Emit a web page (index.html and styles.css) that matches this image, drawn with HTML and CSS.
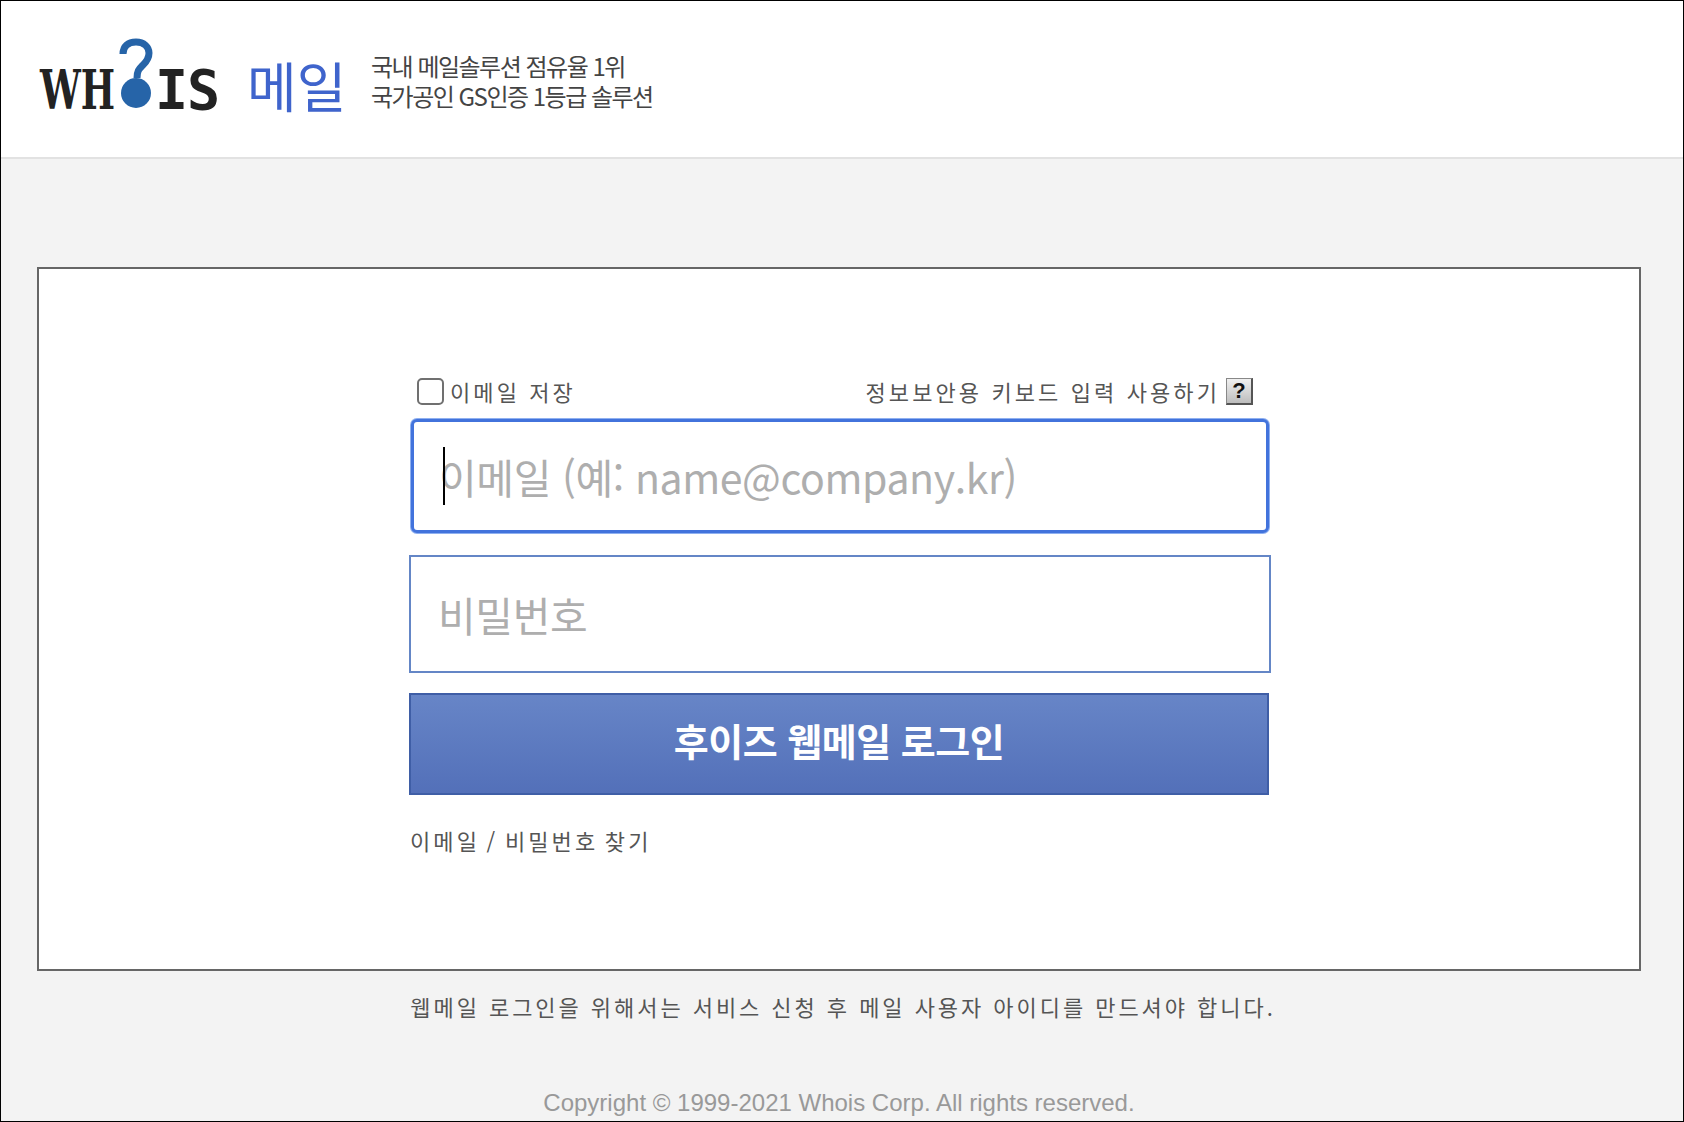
FILE: index.html
```html
<!DOCTYPE html>
<html lang="ko">
<head>
<meta charset="utf-8">
<title>후이즈 웹메일 로그인</title>
<link rel="stylesheet" href="styles.css">
</head>
<body>
<div class="page">
  <header class="top">
    <div class="logo">
      <span class="wm wh">WH</span>
      <svg class="qmark" width="38" height="72" viewBox="0 0 38 72"><path d="M7 16C7 8 12 4 20 4c8 0 13 5 13 11 0 7-4 10-7 13-3 3-5 5-5 12" fill="none" stroke="#2664a8" stroke-width="7"/><circle cx="20" cy="55" r="15" fill="#2664a8"/></svg>
      <span class="wm is">IS</span>
      <span class="mail">메일</span>
    </div>
    <p class="tagline">국내 메일솔루션 점유율 1위<br>국가공인 GS인증 1등급 솔루션</p>
  </header>
  <main class="panel">
    <form class="form">
      <div class="opts">
        <label class="save"><span class="check"></span>이메일 저장</label>
        <div class="kbd">정보보안용 키보드 입력 사용하기<span class="help">?</span></div>
      </div>
      <div class="field focus"><span class="caret"></span><span class="ph">이메일 (예: name@company.kr)</span></div>
      <div class="field pw"><span class="ph">비밀번호</span></div>
      <div class="btn">후이즈 웹메일 로그인</div>
      <a class="find">이메일 / 비밀번호 찾기</a>
    </form>
  </main>
  <p class="note">웹메일 로그인을 위해서는 서비스 신청 후 메일 사용자 아이디를 만드셔야 합니다.</p>
  <p class="copy">Copyright © 1999-2021 Whois Corp. All rights reserved.</p>
</div>
</body>
</html>
```
FILE: styles.css
```css
* { box-sizing: border-box; }
html, body { margin: 0; padding: 0; }
body { font-family: "Noto Sans CJK KR", "Liberation Sans", sans-serif; background: #f3f3f3; }
.page { width: 1684px; height: 1122px; overflow: hidden; border: 1px solid #000; display: flex; flex-direction: column; background: #f3f3f3; }
.top { height: 158px; flex: none; background: #fff; border-bottom: 2px solid #e2e2e2; display: flex; align-items: flex-start; padding: 37px 0 0 39px; }
.logo { display: flex; align-items: flex-end; height: 72px; width: 331px; flex: none; }
.wm { display: block; height: 40px; font: 700 55px/40px "DejaVu Serif", serif; color: #222; transform-origin: left bottom; }
.wh { width: 76px; transform: scaleX(.66); }
.is { width: 66px; font-family: "DejaVu Sans Mono", monospace; letter-spacing: -1px; margin-left: 1px; }
.qmark { flex: none; margin: 0; }
.mail { font: 400 54px/56px "Noto Sans CJK KR", sans-serif; color: #3f64cc; margin-left: 26px; position: relative; top: 3px; }
.tagline { margin: 13px 0 0 0; font-size: 24px; line-height: 30px; letter-spacing: -1.5px; color: #444; }
.panel { width: 1604px; height: 704px; flex: none; margin: 108px 0 0 36px; background: #fff; border: 2px solid #666; padding: 106px 0 0 370px; }
.form { width: 862px; display: flex; flex-direction: column; }
.opts { height: 43px; display: flex; justify-content: space-between; align-items: flex-start; padding: 0 18px 0 8px; font-size: 22px; line-height: 32px; color: #555; letter-spacing: 3.1px; }
.save { display: flex; align-items: center; }
.check { width: 27px; height: 27px; border: 2px solid #707070; border-radius: 5px; margin-right: 6px; background: #fff; }
.kbd { display: flex; align-items: center; }
.help { width: 27px; height: 27px; margin-left: 6px; background: linear-gradient(#f0f0f0, #bdbdbd); border: 1px solid #888; border-right: 2px solid #555; border-bottom: 2px solid #555; font: 700 22px/24px "Liberation Sans", sans-serif; color: #111; text-align: center; letter-spacing: 0; }
.field { height: 118px; background: #fff; border: 2px solid #6486c6; padding-left: 27px; display: flex; align-items: center; position: relative; }
.focus { height: 114px; margin: 1px 2px 22px 2px; border: 3px solid #4273dc; border-radius: 6px; box-shadow: 0 0 0 1px #8fb0f0; padding-left: 25px; }
.ph { font-size: 41px; color: #aeaeae; letter-spacing: -.4px; }
.caret { position: absolute; left: 29px; top: 25px; width: 2px; height: 58px; background: #000; }
.pw { width: 862px; }
.btn { height: 102px; margin: 20px 2px 0 0; background: linear-gradient(#6785c7, #5370b9); border: 2px solid #3f5ea6; color: #fff; font-size: 38px; font-weight: 700; line-height: 90px; text-align: center; letter-spacing: -.5px; }
.find { margin-top: 29px; font-size: 22px; line-height: 32px; color: #555; letter-spacing: 3.1px; word-spacing: -2.7px; padding-left: 1px; }
.note { margin: 19px 0 0; padding-left: 2px; text-align: center; font-size: 22px; line-height: 32px; color: #555; letter-spacing: 2.95px; }
.copy { margin: 65px 0 0; width: 1676px; text-align: center; font: 24px/32px "Liberation Sans", sans-serif; color: #999; }
```
